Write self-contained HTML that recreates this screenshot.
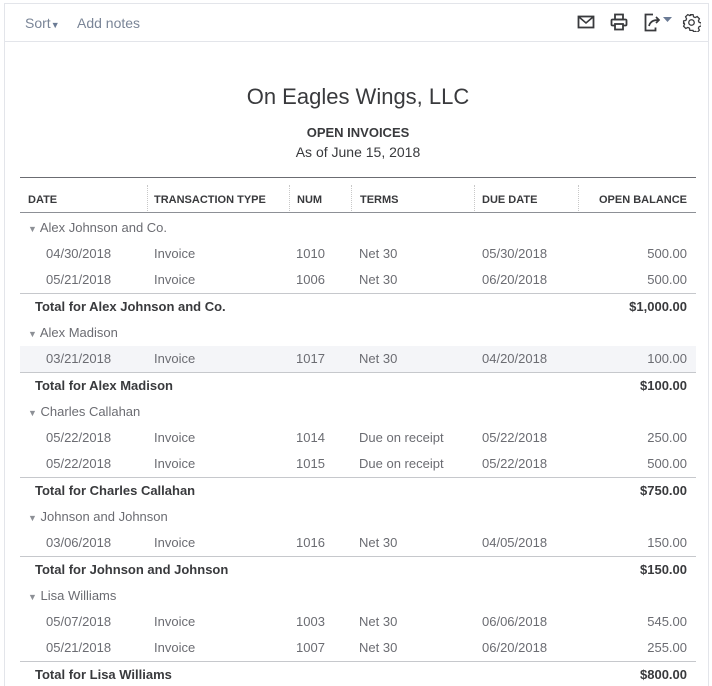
<!DOCTYPE html>
<html style="height:686px;overflow:hidden"><head><meta charset="utf-8"><style>
*{margin:0;padding:0;box-sizing:border-box}
body{width:712px;height:686px;overflow:hidden;background:#fff;font-family:"Liberation Sans",sans-serif;position:relative;color:#393a3d}
.card{position:absolute;left:4px;top:3px;width:705px;height:683px;border:1px solid #e3e5ea;border-bottom:none}
.bar{position:absolute;left:5px;top:41px;width:703px;height:1px;background:#e3e5ea}
.t{position:absolute;font-size:13px;line-height:18px;white-space:nowrap;margin-top:1px}
.g{color:#6b6c72}
.b{font-weight:bold;color:#393a3d}
.r{text-align:right;width:200px}
.h{font-size:11px;font-weight:bold;color:#393a3d}
.ln{position:absolute;left:20px;width:676px;height:1px;background:#c6c8cc}
.sep{position:absolute;top:185px;height:28px;border-left:1px dotted #c8c8c8}
.tri{font-size:9px;color:#8d9096}
</style></head><body>
<div class="card"></div>
<div class="bar"></div>
<div class="t" style="left:25px;top:13px;color:#7a8597;font-size:14px">Sort<span style="font-size:9px;color:#6b7b95">&#9660;</span></div>
<div class="t" style="left:77px;top:13px;color:#7a8597;font-size:14px">Add notes</div>
<svg style="position:absolute;left:577px;top:14px" width="18" height="16" viewBox="0 0 18 16"><rect x="1.5" y="2.5" width="15" height="11" fill="none" stroke="#393a3d" stroke-width="1.8"/><path d="M2 3l7 6 7-6" fill="none" stroke="#393a3d" stroke-width="1.6"/></svg>
<svg style="position:absolute;left:610px;top:13px" width="18" height="18" viewBox="0 0 18 18"><rect x="5" y="1.5" width="8" height="5" fill="none" stroke="#393a3d" stroke-width="1.8"/><rect x="1.5" y="6.5" width="15" height="6" rx="1" fill="none" stroke="#393a3d" stroke-width="1.8"/><rect x="5" y="11" width="8" height="5.5" fill="#fff" stroke="#393a3d" stroke-width="1.8"/></svg>
<svg style="position:absolute;left:643px;top:13px" width="32" height="19" viewBox="0 0 32 19"><path d="M10 1.5H2.5v16h10v-3" fill="none" stroke="#393a3d" stroke-width="1.8"/><path d="M6 13c1-4 4-6 9-6" fill="none" stroke="#393a3d" stroke-width="1.7"/><path d="M13 4l3 3-3 3" fill="none" stroke="#393a3d" stroke-width="1.7"/><path d="M20 4h9l-4.5 5z" fill="#6b7b95"/></svg>
<svg style="position:absolute;left:682px;top:13px" width="19" height="19" viewBox="0 0 24 24"><path d="M10 2h4l.6 2.8 2 1 2.6-1.3 2.8 2.8-1.3 2.6 1 2 2.8.6v4l-2.8.6-1 2 1.3 2.6-2.8 2.8-2.6-1.3-2 1L14 22h-4l-.6-2.8-2-1-2.6 1.3-2.8-2.8 1.3-2.6-1-2L2 14v-4l2.8-.6 1-2-1.3-2.6 2.8-2.8 2.6 1.3 2-1z" fill="none" stroke="#393a3d" stroke-width="1.6"/><circle cx="12" cy="12" r="3.5" fill="none" stroke="#393a3d" stroke-width="1.6"/></svg>

<div class="t" style="left:0;width:716px;text-align:center;top:82px;font-size:22px;line-height:28px;color:#393a3d">On Eagles Wings, LLC</div>
<div class="t" style="left:0;width:716px;text-align:center;top:123px;font-size:13px;font-weight:bold">OPEN INVOICES</div>
<div class="t" style="left:0;width:716px;text-align:center;top:142px;font-size:14px">As of June 15, 2018</div>

<div class="ln" style="top:177px;background:#6b6c72"></div>
<div class="sep" style="left:147px"></div><div class="sep" style="left:289px"></div><div class="sep" style="left:351px"></div><div class="sep" style="left:474px"></div><div class="sep" style="left:578px"></div>
<div class="t h" style="left:28px;top:190px">DATE</div>
<div class="t h" style="left:154px;top:190px">TRANSACTION TYPE</div>
<div class="t h" style="left:297px;top:190px">NUM</div>
<div class="t h" style="left:360px;top:190px">TERMS</div>
<div class="t h" style="left:482px;top:190px">DUE DATE</div>
<div class="t h r" style="left:487px;top:190px">OPEN BALANCE</div>
<div class="ln" style="top:212px;background:#8d9096"></div>

<div class="t g" style="left:28px;top:218px"><span class="tri">&#9660;</span> Alex Johnson and Co.</div>
<div class="t g" style="left:46px;top:244px">04/30/2018</div><div class="t g" style="left:154px;top:244px">Invoice</div><div class="t g" style="left:296px;top:244px">1010</div><div class="t g" style="left:359px;top:244px">Net 30</div><div class="t g" style="left:482px;top:244px">05/30/2018</div><div class="t g r" style="left:487px;top:244px">500.00</div>
<div class="t g" style="left:46px;top:270px">05/21/2018</div><div class="t g" style="left:154px;top:270px">Invoice</div><div class="t g" style="left:296px;top:270px">1006</div><div class="t g" style="left:359px;top:270px">Net 30</div><div class="t g" style="left:482px;top:270px">06/20/2018</div><div class="t g r" style="left:487px;top:270px">500.00</div>
<div class="ln" style="top:293px"></div>
<div class="t b" style="left:35px;top:297px">Total for Alex Johnson and Co.</div><div class="t b r" style="left:487px;top:297px">$1,000.00</div>

<div class="t g" style="left:28px;top:323px"><span class="tri">&#9660;</span> Alex Madison</div>
<div style="position:absolute;left:20px;top:346px;width:676px;height:26px;background:#f4f5f8"></div>
<div class="t g" style="left:46px;top:349px">03/21/2018</div><div class="t g" style="left:154px;top:349px">Invoice</div><div class="t g" style="left:296px;top:349px">1017</div><div class="t g" style="left:359px;top:349px">Net 30</div><div class="t g" style="left:482px;top:349px">04/20/2018</div><div class="t g r" style="left:487px;top:349px">100.00</div>
<div class="ln" style="top:372px"></div>
<div class="t b" style="left:35px;top:376px">Total for Alex Madison</div><div class="t b r" style="left:487px;top:376px">$100.00</div>

<div class="t g" style="left:28px;top:402px"><span class="tri">&#9660;</span> Charles Callahan</div>
<div class="t g" style="left:46px;top:428px">05/22/2018</div><div class="t g" style="left:154px;top:428px">Invoice</div><div class="t g" style="left:296px;top:428px">1014</div><div class="t g" style="left:359px;top:428px">Due on receipt</div><div class="t g" style="left:482px;top:428px">05/22/2018</div><div class="t g r" style="left:487px;top:428px">250.00</div>
<div class="t g" style="left:46px;top:454px">05/22/2018</div><div class="t g" style="left:154px;top:454px">Invoice</div><div class="t g" style="left:296px;top:454px">1015</div><div class="t g" style="left:359px;top:454px">Due on receipt</div><div class="t g" style="left:482px;top:454px">05/22/2018</div><div class="t g r" style="left:487px;top:454px">500.00</div>
<div class="ln" style="top:477px"></div>
<div class="t b" style="left:35px;top:481px">Total for Charles Callahan</div><div class="t b r" style="left:487px;top:481px">$750.00</div>

<div class="t g" style="left:28px;top:507px"><span class="tri">&#9660;</span> Johnson and Johnson</div>
<div class="t g" style="left:46px;top:533px">03/06/2018</div><div class="t g" style="left:154px;top:533px">Invoice</div><div class="t g" style="left:296px;top:533px">1016</div><div class="t g" style="left:359px;top:533px">Net 30</div><div class="t g" style="left:482px;top:533px">04/05/2018</div><div class="t g r" style="left:487px;top:533px">150.00</div>
<div class="ln" style="top:556px"></div>
<div class="t b" style="left:35px;top:560px">Total for Johnson and Johnson</div><div class="t b r" style="left:487px;top:560px">$150.00</div>

<div class="t g" style="left:28px;top:586px"><span class="tri">&#9660;</span> Lisa Williams</div>
<div class="t g" style="left:46px;top:612px">05/07/2018</div><div class="t g" style="left:154px;top:612px">Invoice</div><div class="t g" style="left:296px;top:612px">1003</div><div class="t g" style="left:359px;top:612px">Net 30</div><div class="t g" style="left:482px;top:612px">06/06/2018</div><div class="t g r" style="left:487px;top:612px">545.00</div>
<div class="t g" style="left:46px;top:638px">05/21/2018</div><div class="t g" style="left:154px;top:638px">Invoice</div><div class="t g" style="left:296px;top:638px">1007</div><div class="t g" style="left:359px;top:638px">Net 30</div><div class="t g" style="left:482px;top:638px">06/20/2018</div><div class="t g r" style="left:487px;top:638px">255.00</div>
<div class="ln" style="top:661px"></div>
<div class="t b" style="left:35px;top:665px">Total for Lisa Williams</div><div class="t b r" style="left:487px;top:665px">$800.00</div>
</body></html>
